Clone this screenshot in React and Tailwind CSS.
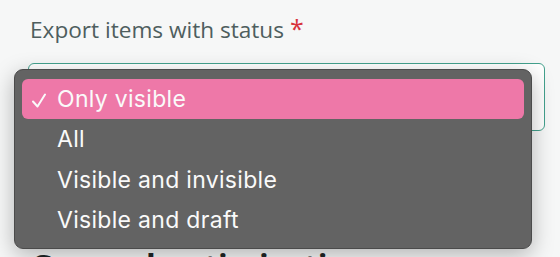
const options = [
  { label: 'Only visible', selected: true },
  { label: 'All' },
  { label: 'Visible and invisible' },
  { label: 'Visible and draft' },
];

function Check() {
  return (
    <svg width="14" height="15" viewBox="0 0 14 15" fill="none" className="ml-[2px] mr-[11px] mt-[2px]">
      <path d="M1 8.5 L5.5 13.5 L13 1.5" stroke="currentColor" strokeWidth="2" strokeLinecap="round" strokeLinejoin="round" />
    </svg>
  );
}

export default function App() {
  return (
    <div className="w-[560px] h-[257px] overflow-hidden bg-[#f6f7f7] font-['Open_Sans',sans-serif]">
      {/* Field label */}
      <div className="pl-[30px] pt-[14px] text-[22.6px] leading-[28px] text-[#4e5e5e]">
        Export items with status <span className="text-[25px] text-[#d8333c]">*</span>
      </div>

      {/* Select + open menu */}
      <div className="relative mt-[19px]">
        <div className="ml-[28px] w-[517px] h-[68px] rounded-[6px] border-[1.5px] border-[#43a18d] bg-white" />

        <div className="absolute left-[14px] top-[6px] w-[518px] h-[180px] rounded-[9px] border border-[#4b4b4b] bg-[#636363] px-[7px] pt-[9px] shadow-[0_6px_22px_rgba(0,0,0,0.28)] font-['Inter',sans-serif] text-[23px] tracking-[0.3px] text-[#fafafa]">
          {options.map((opt) => (
            <div
              key={opt.label}
              className={
                opt.selected
                  ? 'flex h-[40px] items-center rounded-[6px] bg-[#ee78a8] pl-[8px] mb-[0.5px]'
                  : 'flex h-[40px] items-center pl-[35px] mb-[0.5px]'
              }
            >
              {opt.selected && <Check />}
              <span>{opt.label}</span>
            </div>
          ))}
        </div>
      </div>

      {/* Next section heading, mostly hidden under the menu */}
      <h2 className="pl-[30px] mt-[116px] text-[32px] leading-[38px] font-bold text-[#1f2626]">
        General optimization
      </h2>
    </div>
  );
}
